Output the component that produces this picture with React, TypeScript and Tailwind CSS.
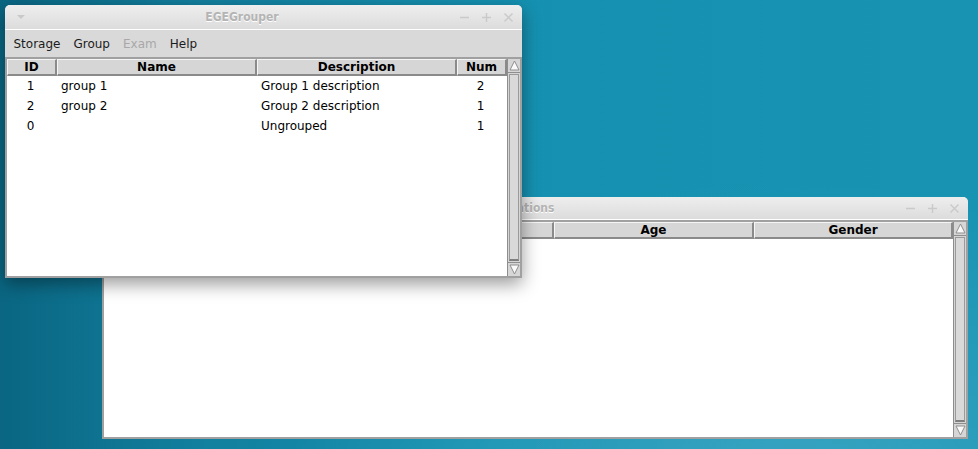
import React from "react";

type Col = { label: string; w: string; align: "center" | "left" };

const groupCols: Col[] = [
    { label: "ID", w: "w-[50px]", align: "center" },
    { label: "Name", w: "w-[200px]", align: "left" },
    { label: "Description", w: "w-[200px]", align: "left" },
    { label: "Num", w: "w-[50px]", align: "center" },
];

const groups = [
    ["1", "group 1", "Group 1 description", "2"],
    ["2", "group 2", "Group 2 description", "1"],
    ["0", "", "Ungrouped", "1"],
];

const examCols: Col[] = [
    { label: "ID", w: "w-[50px]", align: "center" },
    { label: "Name", w: "w-[200px]", align: "left" },
    { label: "Group", w: "w-[200px]", align: "left" },
    { label: "Age", w: "w-[200px]", align: "center" },
    { label: "Gender", w: "flex-1", align: "center" },
];

const condensed = { fontFamily: '"DejaVu Sans Condensed", "DejaVu Sans", sans-serif' };

const TitleBar = ({ title, height }: { title: string; height: string }) => (
    <div className={`flex items-center ${height} shrink-0 rounded-t-[5px] border-b border-white bg-[linear-gradient(#eeeeee,#dcdcdc)] pl-[12px] pr-[8px]`}>
        <svg width="8" height="5" viewBox="0 0 8 5" className="shrink-0">
            <path d="M0 0 L8 0 L4 4 Z" fill="#c9c9c9" />
        </svg>
        <div
            className="flex-1 text-center text-[12px] font-bold text-[#b4b4b4] [text-shadow:0_1px_0_#ffffff]"
            style={condensed}
        >
            {title}
        </div>
        <div className="flex items-center gap-[11px] text-[#cacaca]">
            <svg width="11" height="11" viewBox="0 0 11 11">
                <path d="M1 5.5 H10" stroke="currentColor" strokeWidth="1.5" />
            </svg>
            <svg width="11" height="11" viewBox="0 0 11 11">
                <path d="M1 5.5 H10 M5.5 1 V10" stroke="currentColor" strokeWidth="1.5" />
            </svg>
            <svg width="11" height="11" viewBox="0 0 11 11">
                <path d="M1.5 1.5 L9.5 9.5 M9.5 1.5 L1.5 9.5" stroke="currentColor" strokeWidth="1.5" />
            </svg>
        </div>
    </div>
);

const Arrow = ({ up }: { up: boolean }) => (
    <div className="h-[13px] shrink-0 flex items-center justify-center bg-[#d6d6d6]">
        <svg width="11" height="11" viewBox="0 0 11 11">
            {up ? (
                <path d="M5.5 1 L10 10 L1 10 Z" fill="#fafafa" stroke="#8e8e8e" strokeWidth="1" />
            ) : (
                <path d="M1 1 L10 1 L5.5 10 Z" fill="#fafafa" stroke="#8e8e8e" strokeWidth="1" />
            )}
        </svg>
    </div>
);

const Scrollbar = () => (
    <div className="w-[13px] shrink-0 flex flex-col bg-[#d6d6d6] border-l border-[#8e8e8e]">
        <Arrow up />
        <div className="flex-1 border-y border-[#8e8e8e] p-[1px]">
            <div className="h-full border border-[#9a9a9a] border-b-2 border-b-[#7f7f7f] bg-[#d9d9d9]" />
        </div>
        <Arrow up={false} />
    </div>
);

const Table = ({ cols, rows }: { cols: Col[]; rows: string[][] }) => (
    <div className="flex flex-1 min-h-0 border-2 border-[#a0a0a0] bg-white">
        <div className="flex-1 flex flex-col min-w-0">
            <div className="flex h-[17px] shrink-0">
                {cols.map((c) => (
                    <div
                        key={c.label}
                        className={`${c.w} flex items-center justify-center bg-[#d6d6d6] border-t border-l border-[#f5f5f5] border-b-2 border-r-2 border-b-[#8a8a8a] border-r-[#8a8a8a] text-[12px] font-bold text-black`}
                    >
                        {c.label}
                    </div>
                ))}
            </div>
            {rows.map((r, i) => (
                <div key={i} className="flex h-[20px] items-center text-[12px] text-black">
                    {r.map((v, j) => (
                        <div
                            key={j}
                            className={`${cols[j].w} ${cols[j].align === "center" ? "text-center pr-[3px]" : "pl-[4px]"} whitespace-nowrap`}
                        >
                            {v}
                        </div>
                    ))}
                </div>
            ))}
        </div>
        <Scrollbar />
    </div>
);

export default function App() {
    return (
        <div
            className="relative w-[978px] h-[449px] overflow-hidden bg-[radial-gradient(ellipse_at_80%_110%,rgba(120,200,225,0.35),transparent_45%),linear-gradient(90deg,#0a6682_0%,#127f9e_20%,#1590b0_50%,#1893b2_100%)]"
            style={{ fontFamily: '"DejaVu Sans", sans-serif' }}
        >
            {/* examinations window (behind) */}
            <div className="absolute left-[102px] top-[197px] w-[866px] h-[242px] flex flex-col bg-[#d6d6d6] rounded-t-[5px]">
                <TitleBar title="Examinations" height="h-[23px]" />
                <Table cols={examCols} rows={[]} />
            </div>

            {/* main window */}
            <div className="absolute left-[5px] top-[5px] w-[517px] h-[273px] flex flex-col bg-[#d6d6d6] rounded-t-[5px] shadow-[0_6px_18px_rgba(0,0,0,0.4)]">
                <TitleBar title="EGEGrouper" height="h-[25px]" />
                <div className="flex items-center h-[27px] shrink-0 px-[2px] text-[12px] text-[#1c1c1c] bg-[#d9d9d9]">
                    <span className="px-[6.5px]">Storage</span>
                    <span className="px-[6.5px]">Group</span>
                    <span className="px-[6.5px] text-[#a8a8a8]">Exam</span>
                    <span className="px-[6.5px]">Help</span>
                </div>
                <Table cols={groupCols} rows={groups} />
            </div>
        </div>
    );
}
